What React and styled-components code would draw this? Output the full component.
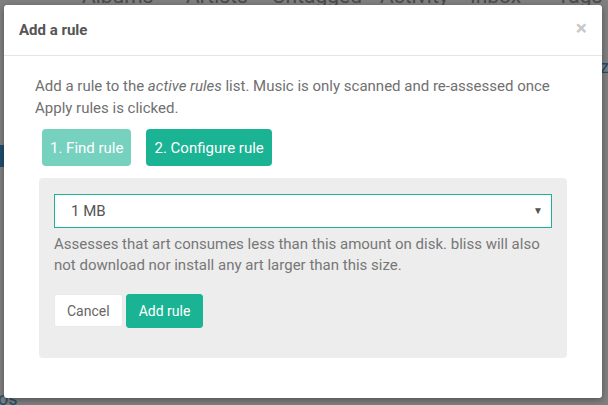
import React from 'react';
import styled, { createGlobalStyle } from 'styled-components';

const GlobalStyle = createGlobalStyle`
  html, body {
    margin: 0;
    padding: 0;
    background: #7f7f7f;
  }
  body {
    font-family: Roboto, "Liberation Sans", sans-serif;
    overflow: hidden;
  }
`;

const teal = '#1ab394';

const Page = styled.div`
  position: relative;
  width: 608px;
  height: 405px;
  overflow: hidden;
  background: #7f7f7f;
`;

const NavBar = styled.nav`
  display: flex;
  height: 5px;
  overflow: hidden;
  padding-left: 82px;
`;

const NavItem = styled.span`
  width: ${(p) => p.w}px;
  flex: none;
  font-size: 21px;
  line-height: 21px;
  margin-top: -14px;
  color: #4a4a4a;
`;

const SideBlock = styled.div`
  position: absolute;
  left: 0;
  top: ${(p) => p.top}px;
  width: 6px;
  height: ${(p) => p.h}px;
  background: #1f4d6e;
`;

const SideText = styled.span`
  position: absolute;
  font-size: 18px;
  color: #1f4d6e;
  ${(p) => p.pos}
`;

const Overlay = styled.div`
  position: absolute;
  inset: 0;
`;

const Modal = styled.div`
  position: absolute;
  left: 4px;
  top: 5px;
  width: 598px;
  height: 393px;
  background: #fff;
  border-radius: 3px;
  box-shadow: 0 2px 6px rgba(0, 0, 0, 0.35);
  display: flex;
  flex-direction: column;
`;

const Header = styled.div`
  display: flex;
  align-items: center;
  justify-content: space-between;
  height: 50px;
  padding: 0 15px;
  border-bottom: 1px solid #e5e5e5;
`;

const Title = styled.h4`
  margin: 0;
  font-size: 15px;
  font-weight: 700;
  color: #555;
`;

const Close = styled.span`
  font-size: 21px;
  font-weight: 700;
  color: #c8c8c8;
  line-height: 1;
  margin-top: -3px;
`;

const Body = styled.div`
  padding: 19px 31px 40px;
`;

const Intro = styled.p`
  margin: 0 0 10px;
  font-size: 15px;
  line-height: 22px;
  color: #707070;
`;

const Steps = styled.div`
  display: flex;
  gap: 15px;
  margin: 0 0 12px 7px;
`;

const StepButton = styled.button`
  font-family: inherit;
  font-size: 15px;
  height: 37px;
  padding: 0 8px;
  border: none;
  border-radius: 4px;
  color: #fff;
  background: ${(p) => (p.done ? '#76d1bf' : teal)};
`;

const Panel = styled.div`
  margin: 0 4px;
  padding: 16px 15px 30px;
  background: #ededed;
  border-radius: 4px;
`;

const SelectBox = styled.div`
  display: flex;
  align-items: center;
  justify-content: space-between;
  height: 32px;
  padding: 0 8px 0 16px;
  background: #fff;
  border: 1px solid ${teal};
  font-size: 15px;
  color: #555;
`;

const Caret = styled.span`
  font-size: 10px;
  color: #555;
  margin-top: -2px;
`;

const Help = styled.p`
  margin: 6px 0 18px;
  font-size: 15px;
  line-height: 21px;
  color: #777;
`;

const Actions = styled.div`
  display: flex;
  gap: 3px;
`;

const Button = styled.button`
  font-family: inherit;
  font-size: 14px;
  height: ${(p) => (p.primary ? 34 : 33)}px;
  padding: 0 12px;
  border-radius: 3px;
  border: 1px solid ${(p) => (p.primary ? teal : '#e7eaec')};
  background: ${(p) => (p.primary ? teal : '#fff')};
  color: ${(p) => (p.primary ? '#fff' : '#666')};
`;

const navItems = [
  ['Albums', 104],
  ['Artists', 86],
  ['Untagged', 108],
  ['Activity', 90],
  ['Inbox', 87],
  ['Tags', 60],
];

export default function App() {
  return (
    <Page>
      <GlobalStyle />
      <NavBar>
        {navItems.map(([label, w]) => (
          <NavItem key={label} w={w}>{label}</NavItem>
        ))}
      </NavBar>
      <SideBlock top={145} h={22} />
      <SideText pos="left: -2px; top: 388px;">os</SideText>
      <SideText pos="left: 600px; top: 56px;">ze</SideText>
      <Overlay>
        <Modal>
          <Header>
            <Title>Add a rule</Title>
            <Close>×</Close>
          </Header>
          <Body>
            <Intro>
              Add a rule to the <em>active rules</em> list. Music is only scanned and re-assessed once
              Apply rules is clicked.
            </Intro>
            <Steps>
              <StepButton done>1. Find rule</StepButton>
              <StepButton>2. Configure rule</StepButton>
            </Steps>
            <Panel>
              <SelectBox>
                <span>1 MB</span>
                <Caret>▼</Caret>
              </SelectBox>
              <Help>
                Assesses that art consumes less than this amount on disk. bliss will also
                not download nor install any art larger than this size.
              </Help>
              <Actions>
                <Button>Cancel</Button>
                <Button primary>Add rule</Button>
              </Actions>
            </Panel>
          </Body>
        </Modal>
      </Overlay>
    </Page>
  );
}
